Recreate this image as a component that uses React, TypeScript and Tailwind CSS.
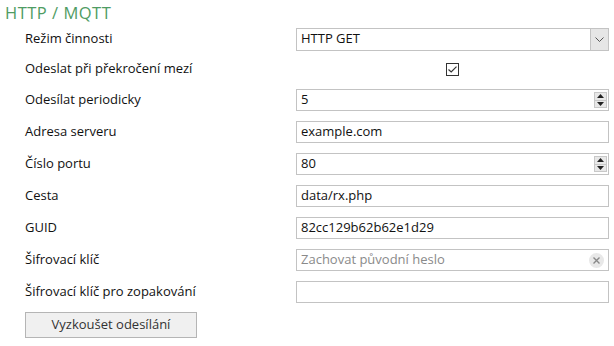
import React from "react";

const font = { fontFamily: '"Open Sans", "Noto Sans", sans-serif' };

function Row({ label, children, h = "h-[32px]" }: { label: string; children?: React.ReactNode; h?: string }) {
  return (
    <div className={`flex items-center ${h}`}>
      <div className="w-[296px] shrink-0 pl-[25px] text-[13px] text-[#111]">{label}</div>
      <div className="flex-1 pr-[5px]">{children}</div>
    </div>
  );
}

function Box({ children, cls = "" }: { children?: React.ReactNode; cls?: string }) {
  return (
    <div className={`flex h-[22px] items-center border border-[#c3c3c3] bg-white pl-[4px] text-[13px] text-[#111] ${cls}`}>
      {children}
    </div>
  );
}

function Spinner() {
  return (
    <div className="ml-auto mr-[1px] flex h-[16px] w-[13px] flex-col border border-[#c8c8c8] bg-[#e8e8e8]">
      <div className="flex flex-1 items-center justify-center border-b border-[#c8c8c8]">
        <svg width="7" height="4" viewBox="0 0 7 4"><path d="M0 4 L3.5 0 L7 4 Z" fill="#222" /></svg>
      </div>
      <div className="flex flex-1 items-center justify-center">
        <svg width="7" height="4" viewBox="0 0 7 4"><path d="M0 0 L3.5 4 L7 0 Z" fill="#222" /></svg>
      </div>
    </div>
  );
}

export default function App() {
  return (
    <div className="h-[346px] w-[614px] bg-white" style={font}>
      <div className="pl-[5px] pt-[2px] text-[16.5px] leading-[22px] tracking-[0.5px] text-[#4f9c63]">HTTP / MQTT</div>
      <div className="flex h-[30px] items-center">
        <div className="w-[296px] shrink-0 pl-[25px] text-[13px] text-[#111]">Režim činnosti</div>
        <div className="flex-1 pr-[5px]">
          <div className="flex h-[23px] items-center border border-[#c3c3c3] bg-white pl-[4px] text-[13px] text-[#111]">
            <span>HTTP GET</span>
            <div className="ml-auto flex h-full w-[18px] items-center justify-center border-l border-[#c3c3c3] bg-[#e6e6e6]">
              <svg width="9" height="5" viewBox="0 0 9 5"><path d="M0.5 0.5 L4.5 4.5 L8.5 0.5" stroke="#555" strokeWidth="1" fill="none" /></svg>
            </div>
          </div>
        </div>
      </div>
      <Row label="Odeslat při překročení mezí" h="h-[30px]">
        <div className="flex justify-center">
          <div className="flex h-[13px] w-[13px] items-center justify-center border border-[#333] bg-white">
            <svg width="9" height="7" viewBox="0 0 9 7"><path d="M0.5 3.5 L3.2 6 L8.5 0.7" stroke="#333" strokeWidth="1.2" fill="none" /></svg>
          </div>
        </div>
      </Row>
      <Row label="Odesílat periodicky">
        <Box><span>5</span><Spinner /></Box>
      </Row>
      <Row label="Adresa serveru">
        <Box>example.com</Box>
      </Row>
      <Row label="Číslo portu">
        <Box><span>80</span><Spinner /></Box>
      </Row>
      <Row label="Cesta">
        <Box>data/rx.php</Box>
      </Row>
      <Row label="GUID">
        <Box>82cc129b62b62e1d29</Box>
      </Row>
      <Row label="Šifrovací klíč">
        <Box>
          <span className="text-[#8a8a8a]">Zachovat původní heslo</span>
          <div className="ml-auto mr-[4px] flex h-[15px] w-[15px] items-center justify-center rounded-full bg-[#e8e8e8]">
            <svg width="7" height="7" viewBox="0 0 7 7"><path d="M0.5 0.5 L6.5 6.5 M6.5 0.5 L0.5 6.5" stroke="#888" strokeWidth="1.4" /></svg>
          </div>
        </Box>
      </Row>
      <Row label="Šifrovací klíč pro zopakování">
        <Box />
      </Row>
      <div className="pl-[25px] pt-[3px]">
        <button className="h-[26px] w-[172px] border border-[#b5b5b5] bg-[#f0f0f0] text-[13px] text-[#333]">Vyzkoušet odesílání</button>
      </div>
    </div>
  );
}
